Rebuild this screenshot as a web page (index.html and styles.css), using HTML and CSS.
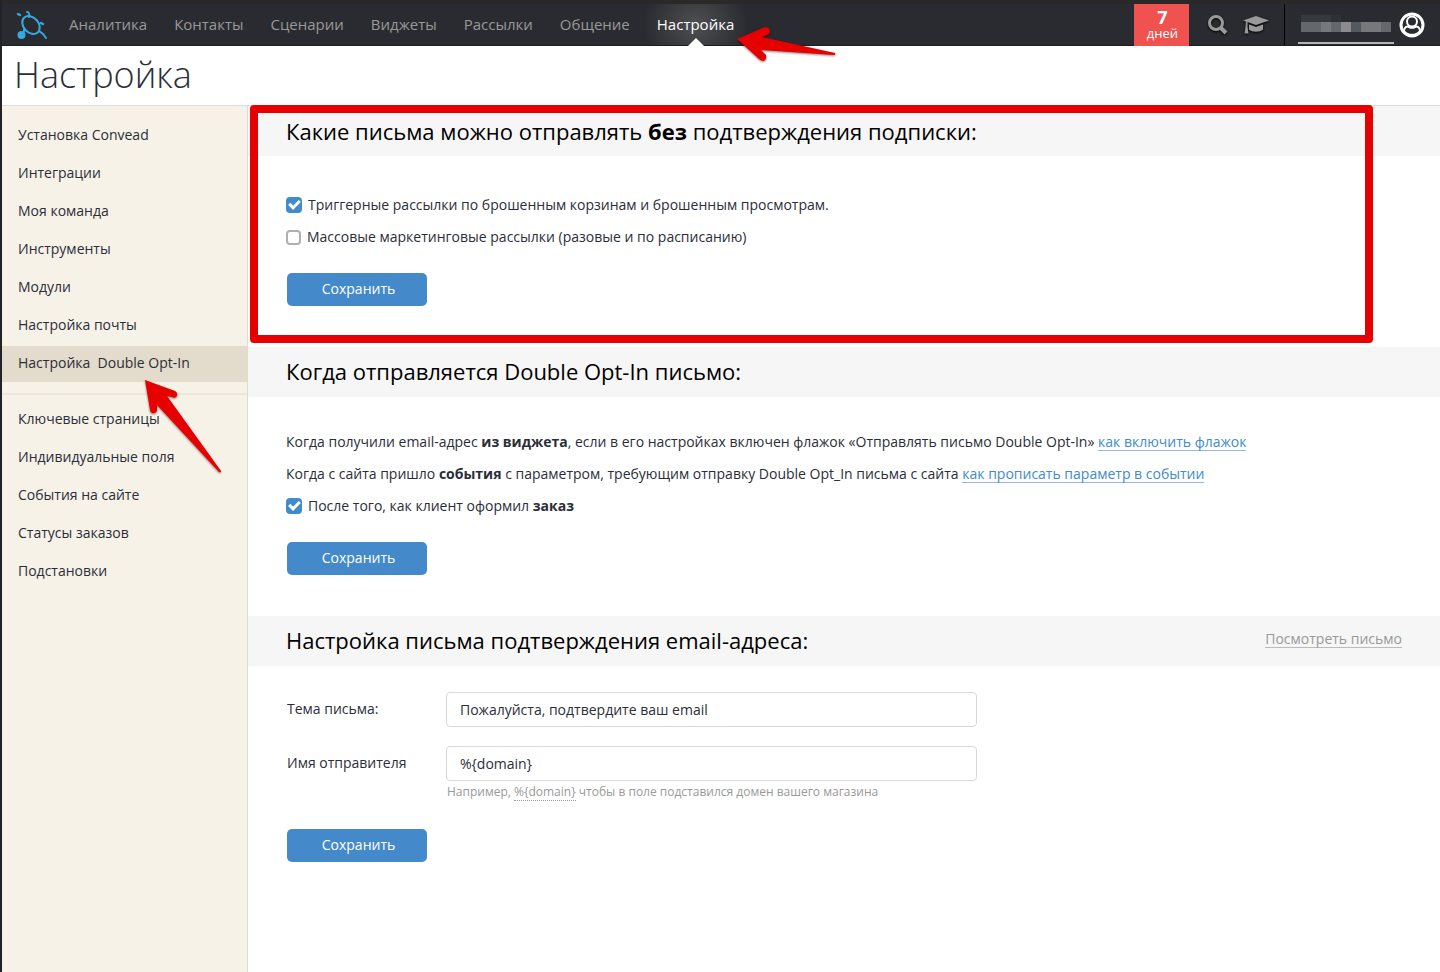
FILE: index.html
```
<!DOCTYPE html>
<html lang="ru">
<head>
	<meta charset="utf-8">
	<title>Настройка Double Opt-In</title>
	<link rel="stylesheet" href="styles.css">
</head>
<body>
	<header class="topbar">
		<a href="#" class="logo" aria-label="Convead">
			<svg width="32" height="30" viewBox="0 0 32 30" fill="none" stroke="#35a8e0" stroke-width="2" stroke-linecap="round">
				<ellipse cx="15" cy="15" rx="7.500" ry="10" transform="rotate(-42 15 15)"/>
				<path d="M11 2q3 0 2 5M23 21l4 3 3 4M8 18q1 3-2 6"/>
				<path d="M2 4l2 1M25 13l2 1" stroke-width="2.500"/>
				<circle cx="5.500" cy="25" r="4" fill="#35a8e0" stroke="none"/>
			</svg>
		</a>
		<nav class="mainmenu">
			<a href="#">Аналитика</a>
			<a href="#">Контакты</a>
			<a href="#">Сценарии</a>
			<a href="#">Виджеты</a>
			<a href="#">Рассылки</a>
			<a href="#">Общение</a>
			<a href="#" class="active">Настройка
				<svg class="arrow_menu" width="100" height="38" viewBox="0 0 100 38">
					<path d="M1 13L29 1Q33 1 34 5Q34 8 31 9L26 11L99 27Q100 29 98 29L25 24L30 29Q31 33 28 35Q25 35 23 33Z" fill="#e60000"/>
				</svg>
			</a>
		</nav>
		<div class="tools">
			<a href="#" class="trial"><b>7</b>дней</a>
			<a href="#" class="tool" aria-label="Поиск">
				<svg width="20" height="20" viewBox="0 0 20 20" fill="none" stroke="#999" stroke-width="3">
					<circle cx="8" cy="8" r="6.500"/>
					<path d="M13 13l5 5" stroke-width="4"/>
				</svg>
			</a>
			<a href="#" class="tool" aria-label="Обучение">
				<svg width="28" height="20" viewBox="0 0 28 20" fill="#999">
					<path d="M14 1L27 5.500L14 10L1 5.500Z"/>
					<path d="M7 9.500l7 2.500L21 9.500v5c-3 3-11 3-14 0z"/>
					<path d="M4 6h1.500v6l1 6.500h-4l1-6.500z"/>
				</svg>
			</a>
			<a href="#" class="user">
				<span class="username">
					<svg width="90" height="17" viewBox="0 0 90 17" shape-rendering="crispEdges">
						<path fill="#363a3f" d="M0 0h30v7H0z"/>
						<path fill="#2e3136" d="M30 0h10v7H30z"/>
						<path fill="#64676b" d="M0 7h90v10H0z"/>
						<path fill="#77787c" d="M20 7h10v10H20zM60 7h20v10H60z"/>
						<path fill="#8c8c8e" d="M40 7h10v10H40z"/>
						<path fill="#54595d" d="M50 7h10v10H50z"/>
					</svg>
				</span>
				<svg width="26" height="26" viewBox="0 0 26 26">
					<circle cx="13" cy="13" r="11" fill="#292b30" stroke="#fff" stroke-width="3"/>
					<path d="M5 19c0-4 3-5 5-4 2 1 4 1 6 0 2-1 5 0 5 4-4 5-12 5-16 0z" fill="#292b30" stroke="#fff" stroke-width="2"/>
					<circle cx="13" cy="9.500" r="5" fill="#292b30" stroke="#fff" stroke-width="2"/>
				</svg>
			</a>
		</div>
	</header>

	<h1>Настройка</h1>

	<div class="page">
		<aside class="sidebar">
			<a href="#">Установка Convead</a>
			<a href="#">Интеграции</a>
			<a href="#">Моя команда</a>
			<a href="#">Инструменты</a>
			<a href="#">Модули</a>
			<a href="#">Настройка почты</a>
			<a href="#" class="active">Настройка&nbsp; Double Opt-In
				<svg class="arrow_side" width="80" height="96" viewBox="0 0 80 96">
					<path d="M1 1L31 12Q34 14 33 17Q31 20 28 18L23 17L77 92Q77 94 75 93L13 26L13 32Q11 35 8 34Q6 33 6 31Z" fill="#e60000"/>
				</svg>
			</a>
			<hr>
			<a href="#">Ключевые страницы</a>
			<a href="#">Индивидуальные поля</a>
			<a href="#">События на сайте</a>
			<a href="#">Статусы заказов</a>
			<a href="#">Подстановки</a>
		</aside>

		<main class="content">
			<form class="block first">
				<div class="red_frame"></div>
				<div class="block_head">
					<h2>Какие письма можно отправлять <b>без</b> подтверждения подписки:</h2>
				</div>
				<div class="block_body">
					<label class="row"><input type="checkbox" checked>Триггерные рассылки по брошенным корзинам и брошенным просмотрам.</label>
					<label class="row"><input type="checkbox">Массовые маркетинговые рассылки (разовые и по расписанию)</label>
					<button type="button">Сохранить</button>
				</div>
			</form>

			<form class="block">
				<div class="block_head">
					<h2>Когда отправляется Double Opt-In письмо:</h2>
				</div>
				<div class="block_body">
					<p class="row">Когда получили email-адрес <b>из виджета</b>, если в его настройках включен флажок «Отправлять письмо Double Opt-In» <a href="#">как включить флажок</a></p>
					<p class="row">Когда с сайта пришло <b>события</b> с параметром, требующим отправку Double Opt_In письма с сайта <a href="#">как прописать параметр в событии</a></p>
					<label class="row"><input type="checkbox" checked>После того, как клиент оформил <b>заказ</b></label>
					<button type="button">Сохранить</button>
				</div>
			</form>

			<form class="block">
				<div class="block_head">
					<h2>Настройка письма подтверждения email-адреса:</h2>
					<a href="#" class="preview">Посмотреть письмо</a>
				</div>
				<div class="block_body fields">
					<div class="field">
						<label for="subject">Тема письма:</label>
						<input type="text" id="subject" value="Пожалуйста, подтвердите ваш email">
					</div>
					<div class="field">
						<label for="sender">Имя отправителя</label>
						<input type="text" id="sender" value="%{domain}">
						<p class="hint">Например, <span>%{domain}</span> чтобы в поле подставился домен вашего магазина</p>
					</div>
					<button type="button">Сохранить</button>
				</div>
			</form>
		</main>
	</div>
</body>
</html>
```

FILE: styles.css
```
*, *:after {
	box-sizing: border-box;
}
body {
	margin: 0;
	min-height: 100vh;
	display: flex;
	flex-direction: column;
	border-left: 2px solid #232327;
	font: 14px/20px "Open Sans", sans-serif;
	color: #2b2e38;
	background: #fff;
}
a {
	color: inherit;
	text-decoration: none;
}

/* top bar */
.topbar {
	display: flex;
	height: 46px;
	padding-left: 14px;
	border-top: 4px solid #2a2828;
	border-bottom: 1px solid #1b1d22;
	background: #292b30;
}
.logo {
	display: flex;
	align-items: center;
	margin-right: 7px;
}
.mainmenu {
	display: flex;
	flex: 1;
}
.mainmenu a {
	position: relative;
	padding: 0 13px 0 14px;
	font-size: 15px;
	line-height: 41px;
	color: #999;
}
.mainmenu .active {
	padding: 0 14px;
	color: #fff;
	background: radial-gradient(ellipse 52px 46px, #4d4f52, #292b30);
}
.mainmenu .active:after {
	content: "";
	position: absolute;
	left: 50%;
	bottom: -1px;
	margin-left: -8px;
	border: 8px solid transparent;
	border-top: 0;
	border-bottom-color: #fff;
}
.arrow_menu {
	position: absolute;
	left: 93px;
	top: 22px;
	z-index: 2;
	filter: drop-shadow(0 1px 1px rgba(0, 0, 0, .5));
}
.tools {
	display: flex;
	align-items: center;
}
.trial {
	width: 55px;
	height: 42px;
	margin-right: 19px;
	padding: 5px 0 0 2px;
	align-self: flex-start;
	background: #f0524f;
	color: #fff;
	font-size: 13px;
	line-height: 16px;
	text-align: center;
}
.trial b {
	display: block;
	font-size: 18px;
	line-height: 16px;
}
.tool {
	display: flex;
	margin-right: 14px;
	filter: drop-shadow(0 1px 1px #000);
}
.user {
	display: flex;
	align-items: center;
	gap: 5px;
	height: 100%;
	padding: 0 15px 0 13px;
	border-left: 1px solid #000;
}
.username {
	display: flex;
	align-self: flex-start;
	width: 96px;
	height: 40px;
	padding: 11px 3px 0;
	border-bottom: 2px solid #b4b5b7;
}

h1 {
	margin: 0;
	height: 60px;
	padding-left: 12px;
	border-bottom: 1px solid #dadddd;
	font-size: 36px;
	line-height: 58px;
	font-weight: 300;
}
.page {
	display: flex;
	flex: 1;
}

/* left menu */
.sidebar {
	display: flex;
	flex-direction: column;
	gap: 2px;
	width: 246px;
	padding-top: 12px;
	border-right: 1px solid #dedbd3;
	background: #f7f2e8;
}
.sidebar a {
	position: relative;
	padding-left: 16px;
	line-height: 34px;
	height: 36px;
}
.sidebar .active {
	background: #e3dbcb;
}
.sidebar hr {
	width: 100%;
	margin: 9px 0 5px;
	border: 0;
	border-top: 2px solid #ede6da;
}
.arrow_side {
	position: absolute;
	left: 142px;
	top: 33px;
	z-index: 2;
	filter: drop-shadow(0 1px 1px rgba(0, 0, 0, .5));
}

/* settings blocks */
.content {
	flex: 1;
}
.block {
	position: relative;
}
.block_head {
	display: flex;
	justify-content: space-between;
	align-items: center;
	height: 50px;
	padding: 0 38px 3px;
	background: #f6f6f6;
}
h2 {
	margin: 0;
	font-size: 22px;
	line-height: 30px;
	font-weight: 400;
	color: #000;
}
.block_body {
	padding: 29px 38px 41px;
}
.first .block_head {
	padding-bottom: 0;
}
.first .block_body {
	padding-top: 33px;
}
.row {
	display: flex;
	align-items: center;
	margin: 0;
	height: 32px;
	white-space: pre-wrap;
}
.row a {
	color: #428bca;
	line-height: 16px;
	border-bottom: 1px solid #8fb9df;
}
.row input {
	appearance: none;
	width: 15px;
	height: 15px;
	margin: 0 6px 0 0;
	border: 2px solid #b0b0b0;
	border-radius: 4px;
}
.row input:checked {
	width: 16px;
	height: 16px;
	border: 0;
	background: #428bca;
}
.row input:checked:after {
	content: "";
	display: block;
	width: 11px;
	height: 7px;
	margin: 3px;
	border: solid #fff;
	border-width: 0 0 3px 3px;
	transform: rotate(-45deg);
}
button {
	display: block;
	width: 140px;
	height: 33px;
	margin: 20px 0 0 1px;
	padding: 0 0 2px 3px;
	border: 0;
	border-radius: 5px;
	background: #448acb;
	color: #fff;
	font: inherit;
}
.preview {
	color: #999;
	line-height: 16px;
	border-bottom: 1px solid #bbb;
}
.fields {
	padding: 26px 39px;
}
.field {
	display: grid;
	grid-template-columns: 159px minmax(0, 531px);
	margin-bottom: 19px;
	line-height: 34px;
}
.field input {
	height: 35px;
	padding: 0 13px;
	border: 1px solid #d9d9d9;
	border-radius: 4px;
	font: inherit;
	color: inherit;
}
.hint {
	grid-column: 2;
	margin: 0 0 7px 1px;
	font-size: 12px;
	line-height: 21px;
	color: #999;
}
.hint span {
	padding-bottom: 0;
	border-bottom: 1px dotted #999;
}
.fields button {
	margin-left: 0;
}

/* highlight over the first block */
.red_frame {
	position: absolute;
	top: -1px;
	right: 67px;
	bottom: 4px;
	left: 2px;
	z-index: 1;
	border: 8px solid #e60000;
	border-radius: 4px;
	pointer-events: none;
}
```
